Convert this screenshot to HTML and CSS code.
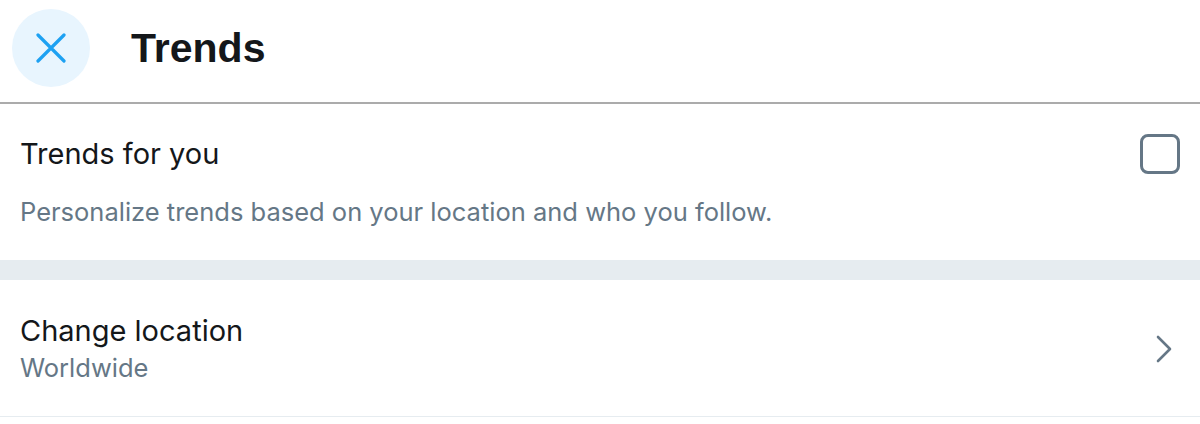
FILE: index.html
```html
<!DOCTYPE html>
<html>
<head>
<meta charset="utf-8">
<link rel="stylesheet" href="styles.css">
</head>
<body>
<div class="page">
  <header class="header">
    <button class="close" aria-label="Close">
      <svg viewBox="0 0 30 30" width="30" height="30"><path d="M2 2 L28 28 M28 2 L2 28" stroke="#1da1f2" stroke-width="3.2" stroke-linecap="round" fill="none"/></svg>
    </button>
    <h1 class="title">Trends</h1>
  </header>
  <section class="section first">
    <div class="row">
      <span class="label">Trends for you</span>
      <span class="checkbox"></span>
    </div>
    <p class="desc">Personalize trends based on your location and who you follow.</p>
  </section>
  <div class="band"></div>
  <section class="section link">
    <div class="linktext">
      <span class="label">Change location</span>
      <span class="sub">Worldwide</span>
    </div>
    <svg class="chevron" viewBox="0 0 16 28" width="16" height="28"><path d="M2 2 L14 14 L2 26" stroke="#657786" stroke-width="2.6" stroke-linecap="round" stroke-linejoin="round" fill="none"/></svg>
  </section>
</div>
</body>
</html>
```
FILE: styles.css
```css
* { box-sizing: border-box; }
html, body { margin: 0; padding: 0; background: #fff; }
body { font-family: Inter, "Noto Sans", sans-serif; color: #14171a; }
.page { width: 1200px; }
.header {
  height: 104px;
  display: flex;
  align-items: center;
  padding: 0 0 2px 12px;
  border-bottom: 2px solid #ababab;
}
.close {
  width: 78px; height: 78px;
  border-radius: 50%;
  background: #e8f5fe;
  border: 0; padding: 0;
  display: flex; align-items: center; justify-content: center;
  margin-top: -4px;
}
.title {
  margin: 0 0 0 41px;
  font-family: "Liberation Sans", Arial, sans-serif;
  font-weight: 700;
  font-size: 41px;
  line-height: 46px;
  color: #14171a;
  margin-top: -4px;
}
.section { padding: 30px 20px 30px 20px; }
.first { height: 156px; }
.row { display: flex; align-items: center; justify-content: space-between; height: 40px; }
.label { font-size: 29px; line-height: 40px; color: #14171a; }
.checkbox {
  width: 40px; height: 40px;
  border: 3px solid #657786;
  border-radius: 8px;
}
.desc {
  margin: 20px 0 0;
  font-size: 25.5px; line-height: 36px;
  color: #657786;
}
.band { height: 20px; background: #e6ecf0; }
.link {
  display: flex; align-items: center; justify-content: space-between;
  height: 137px;
  border-bottom: 1px solid #e6ecf0;
  padding-right: 28px;
}
.linktext { display: flex; flex-direction: column; }
.sub { font-size: 25.5px; line-height: 34px; color: #657786; }
.chevron { margin-top: 2px; }
```
